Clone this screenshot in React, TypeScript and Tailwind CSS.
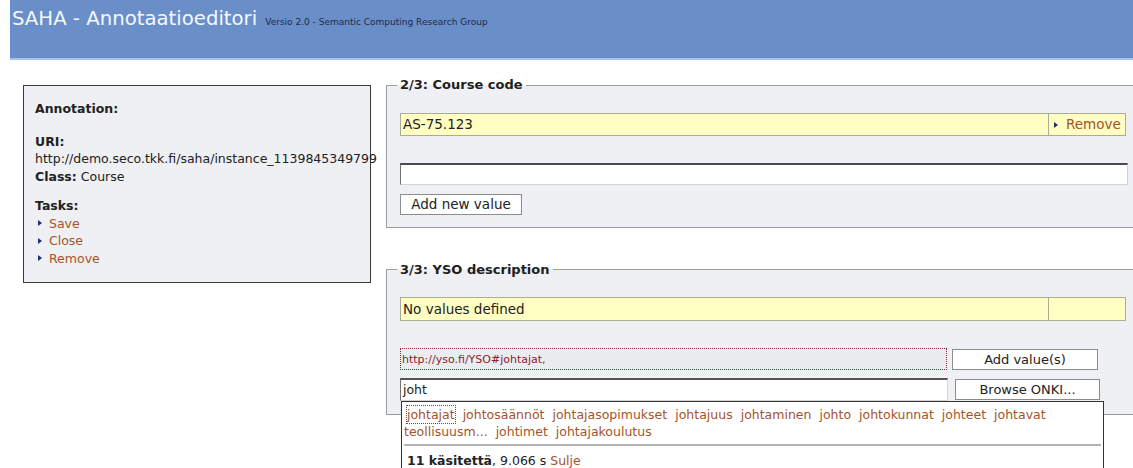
import type { ReactNode } from 'react'

const font = { fontFamily: '"DejaVu Sans", Verdana, sans-serif' }

const items1 = [
  'johtajat',
  'johtosäännöt',
  'johtajasopimukset',
  'johtajuus',
  'johtaminen',
  'johto',
  'johtokunnat',
  'johteet',
  'johtavat',
]
const items2 = ['teollisuusm...', 'johtimet', 'johtajakoulutus']

function Bullet() {
  return (
    <span className="inline-block h-0 w-0 border-y-[3px] border-l-[4px] border-y-transparent border-l-[#1d2f6f]" />
  )
}

function TaskLink({ children }: { children: ReactNode }) {
  return (
    <div className="flex items-center gap-[7px] pl-[3px]">
      <Bullet />
      <a className="text-[#a5532b]">{children}</a>
    </div>
  )
}

function Button({ children, className }: { children: ReactNode; className: string }) {
  return (
    <button
      className={`shrink-0 border border-[#8c8c8c] bg-white text-center leading-none text-[#222] ${className}`}
    >
      {children}
    </button>
  )
}

function Fieldset({ legend, className, children }: { legend: string; className: string; children: ReactNode }) {
  return (
    <fieldset className={`border border-[#9c9c9c] bg-[#eef0f3] pl-[13px] ${className}`}>
      <legend className="ml-[-3px] px-[3px] text-[13px] font-bold leading-[16px] text-[#1e1e1e]">{legend}</legend>
      {children}
    </fieldset>
  )
}

export default function App() {
  return (
    <div className="h-[468px] w-[1133px] overflow-hidden bg-white text-[#222]" style={font}>
      <header className="ml-[10px] flex h-[60px] items-baseline border-b-2 border-[#a9c3e7] bg-[#6a8ec8] pl-[2px] pt-[6px]">
        <h1 className="text-[19.7px] leading-[26px] text-[#f5f8fd]">SAHA - Annotaatioeditori</h1>
        <span className="ml-[8px] text-[9px] text-[#1c2a4c]">Versio 2.0 - Semantic Computing Research Group</span>
      </header>

      <div className="flex items-start">
        {/* annotation summary */}
        <aside className="ml-[23px] mt-[25px] h-[198px] w-[348px] shrink-0 border border-[#3a3a3a] bg-[#eef0f3] pl-[11px] pt-[14px] text-[12.5px] leading-[17.5px]">
          <div className="font-bold">Annotation:</div>
          <div className="mt-[15px] font-bold">URI:</div>
          <div className="whitespace-nowrap">http://demo.seco.tkk.fi/saha/instance_1139845349799</div>
          <div>
            <span className="font-bold">Class:</span> Course
          </div>
          <div className="mt-[12px] font-bold">Tasks:</div>
          <TaskLink>Save</TaskLink>
          <TaskLink>Close</TaskLink>
          <TaskLink>Remove</TaskLink>
        </aside>

        <main className="ml-[15px] mr-[-6px] mt-[17px] flex-1">
          <Fieldset legend="2/3: Course code" className="pb-[11px] pt-[20px]">
            <div className="flex h-[23px] w-[726px] border border-[#acac94] bg-[#ffffc4] text-[13.5px] leading-[21px]">
              <div className="flex-1 pl-[2px]">AS-75.123</div>
              <div className="flex w-[77px] items-center gap-[8px] border-l border-[#acac94] pl-[5px]">
                <Bullet />
                <a className="text-[#a5532b]">Remove</a>
              </div>
            </div>
            <input
              className="mt-[27px] block h-[22px] w-[728px] border border-[#d4d4d4] border-l-[#707070] border-t-2 border-t-[#4a4a4a] bg-white"
              readOnly
            />
            <Button className="mt-[9px] h-[21px] w-[122px] text-[13.5px]">Add new value</Button>
          </Fieldset>

          <Fieldset legend="3/3: YSO description" className="mt-[34px] pb-[13px] pt-[19px]">
            <div className="flex h-[24px] w-[726px] border border-[#acac94] bg-[#ffffc4] text-[13.5px] leading-[22px]">
              <div className="flex-1 pl-[2px]">No values defined</div>
              <div className="w-[77px] border-l border-[#acac94]" />
            </div>

            <div className="mt-[27px] flex items-start">
              <div className="h-[22px] w-[547px] border border-dotted border-[#8a2b3d] bg-[#ebecf0] pl-[1px] text-[11px] leading-[21px] text-[#8b1c2c]">
                http://yso.fi/YSO#johtajat,
              </div>
              <Button className="ml-[5px] mt-[1px] h-[21px] w-[146px] text-[13px]">Add value(s)</Button>
            </div>

            <div className="relative mt-[8px] flex items-start">
              <div className="h-[23px] w-[548px] border border-[#d4d4d4] border-l-[#707070] border-t-2 border-t-[#555] bg-white pl-[2px] text-[12.5px] leading-[19px]">
                joht
              </div>
              <Button className="ml-[7px] mt-[1px] h-[21px] w-[145px] text-[13px]">Browse ONKI...</Button>

              {/* suggestion popup */}
              <div className="absolute left-[1px] top-[23px] z-10 h-[80px] w-[703px] border border-[#333] bg-white px-[2px] pt-[4px] text-[12.5px] leading-[17px]">
                <div className="flex gap-[8px] pl-[3px] text-[#a5532b]">
                  {items1.map((w, i) => (
                    <span key={w} className={i === 0 ? 'outline-1 outline-dotted outline-[#555]' : ''}>
                      {w}
                    </span>
                  ))}
                </div>
                <div className="flex gap-[8px] text-[#a5532b]">
                  {items2.map((w) => (
                    <span key={w}>{w}</span>
                  ))}
                </div>
                <div className="mt-[4px] h-[2px] bg-[#b4b4b4]" />
                <div className="mt-[6px] pl-[3px]">
                  <span className="font-bold">11 käsitettä</span>, 9.066 s <a className="text-[#a5532b]">Sulje</a>
                </div>
              </div>
            </div>
          </Fieldset>
        </main>
      </div>
    </div>
  )
}
